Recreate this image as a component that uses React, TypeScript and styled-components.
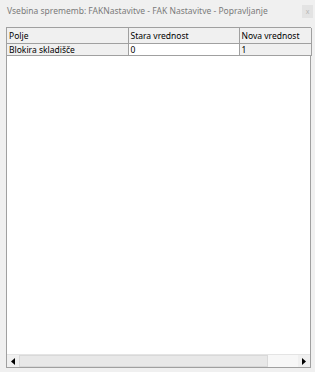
import styled, { createGlobalStyle } from "styled-components";

const GlobalStyle = createGlobalStyle`
  html, body {
    margin: 0;
    padding: 0;
    background: #f0f0f0;
  }
  body {
    font-family: "Noto Sans", "Open Sans", sans-serif;
  }
`;

type Column = { title: string; field: string; width: number };

const columns: Column[] = [
  { title: "Polje", field: "field", width: 121 },
  { title: "Stara vrednost", field: "oldValue", width: 111 },
  { title: "Nova vrednost", field: "newValue", width: 72 },
];

const rows = [{ field: "Blokira skladišče", oldValue: "0", newValue: "1" }];

function App() {
  return (
    <Window>
      <GlobalStyle />
      <TitleBar>
        <Title>Vsebina sprememb: FAKNastavitve - FAK Nastavitve - Popravljanje</Title>
        <CloseButton>x</CloseButton>
      </TitleBar>
      <Grid>
        <Table>
          <thead>
            <tr>
              {columns.map((column, index) => (
                <Th key={`th-${index}`} style={{ width: column.width }}>
                  {column.title}
                </Th>
              ))}
            </tr>
          </thead>
          <tbody>
            {rows.map((row, index) => (
              <tr key={`tr-${index}`}>
                <Td $readonly>{row.field}</Td>
                <Td>{row.oldValue}</Td>
                <Td $readonly>{row.newValue}</Td>
              </tr>
            ))}
          </tbody>
        </Table>
        <Filler />
        <ScrollBar>
          <ArrowButton>
            <svg width="4" height="7" viewBox="0 0 4 7">
              <path d="M4 0 L0 3.5 L4 7 Z" fill="#000" />
            </svg>
          </ArrowButton>
          <Thumb />
          <Track />
          <ArrowButton>
            <svg width="4" height="7" viewBox="0 0 4 7">
              <path d="M0 0 L4 3.5 L0 7 Z" fill="#000" />
            </svg>
          </ArrowButton>
        </ScrollBar>
      </Grid>
    </Window>
  );
}

const Window = styled.div`
  width: 315px;
  height: 372px;
  display: flex;
  flex-direction: column;
  background: #f0f0f0;
  box-sizing: border-box;
`;

const TitleBar = styled.div`
  height: 27px;
  display: flex;
  align-items: flex-start;
  justify-content: space-between;
  padding: 4px 2px 0 7px;
  box-sizing: border-box;
`;

const Title = styled.div`
  font-size: 8.5px;
  line-height: 13px;
  color: #7a7a7a;
  white-space: nowrap;
`;

const CloseButton = styled.div`
  width: 11px;
  height: 13px;
  margin-top: 1px;
  background: #e3e3e3;
  color: #b8b8b8;
  font-size: 7px;
  line-height: 13px;
  text-align: center;
`;

const Grid = styled.div`
  margin-left: 6px;
  width: 305px;
  height: 341px;
  border: 1px solid #a0a0a0;
  box-sizing: border-box;
  background: #fff;
  display: flex;
  flex-direction: column;
`;

const Table = styled.table`
  border-collapse: collapse;
  table-layout: fixed;
  width: 304px;
  font-size: 8.5px;
  color: #000;
`;

const Th = styled.th`
  height: 15px;
  padding: 0 2px;
  text-align: left;
  font-weight: normal;
  background: #f0f0f0;
  border-right: 1px solid #a0a0a0;
  border-bottom: 1px solid #a0a0a0;
  box-sizing: border-box;
  white-space: nowrap;
  overflow: hidden;
`;

const Td = styled.td<{ $readonly?: boolean }>`
  height: 12px;
  padding: 0 2px;
  text-align: left;
  background: ${(p) => (p.$readonly ? "#f0f0f0" : "#fff")};
  border-right: 1px solid #a0a0a0;
  border-bottom: 1px solid #a0a0a0;
  box-sizing: border-box;
  white-space: nowrap;
  overflow: hidden;
`;

const Filler = styled.div`
  flex: 1;
`;

const ScrollBar = styled.div`
  height: 12px;
  display: flex;
  border-top: 1px solid #e4e4e4;
  background: #f0f0f0;
`;

const ArrowButton = styled.div`
  width: 12px;
  display: flex;
  align-items: center;
  justify-content: center;
`;

const Thumb = styled.div`
  width: 249px;
  border: 1px solid #d9d9d9;
  box-sizing: border-box;
  background: #e8e8e8;
`;

const Track = styled.div`
  flex: 1;
  background: #f7f7f7;
`;

export default App;
